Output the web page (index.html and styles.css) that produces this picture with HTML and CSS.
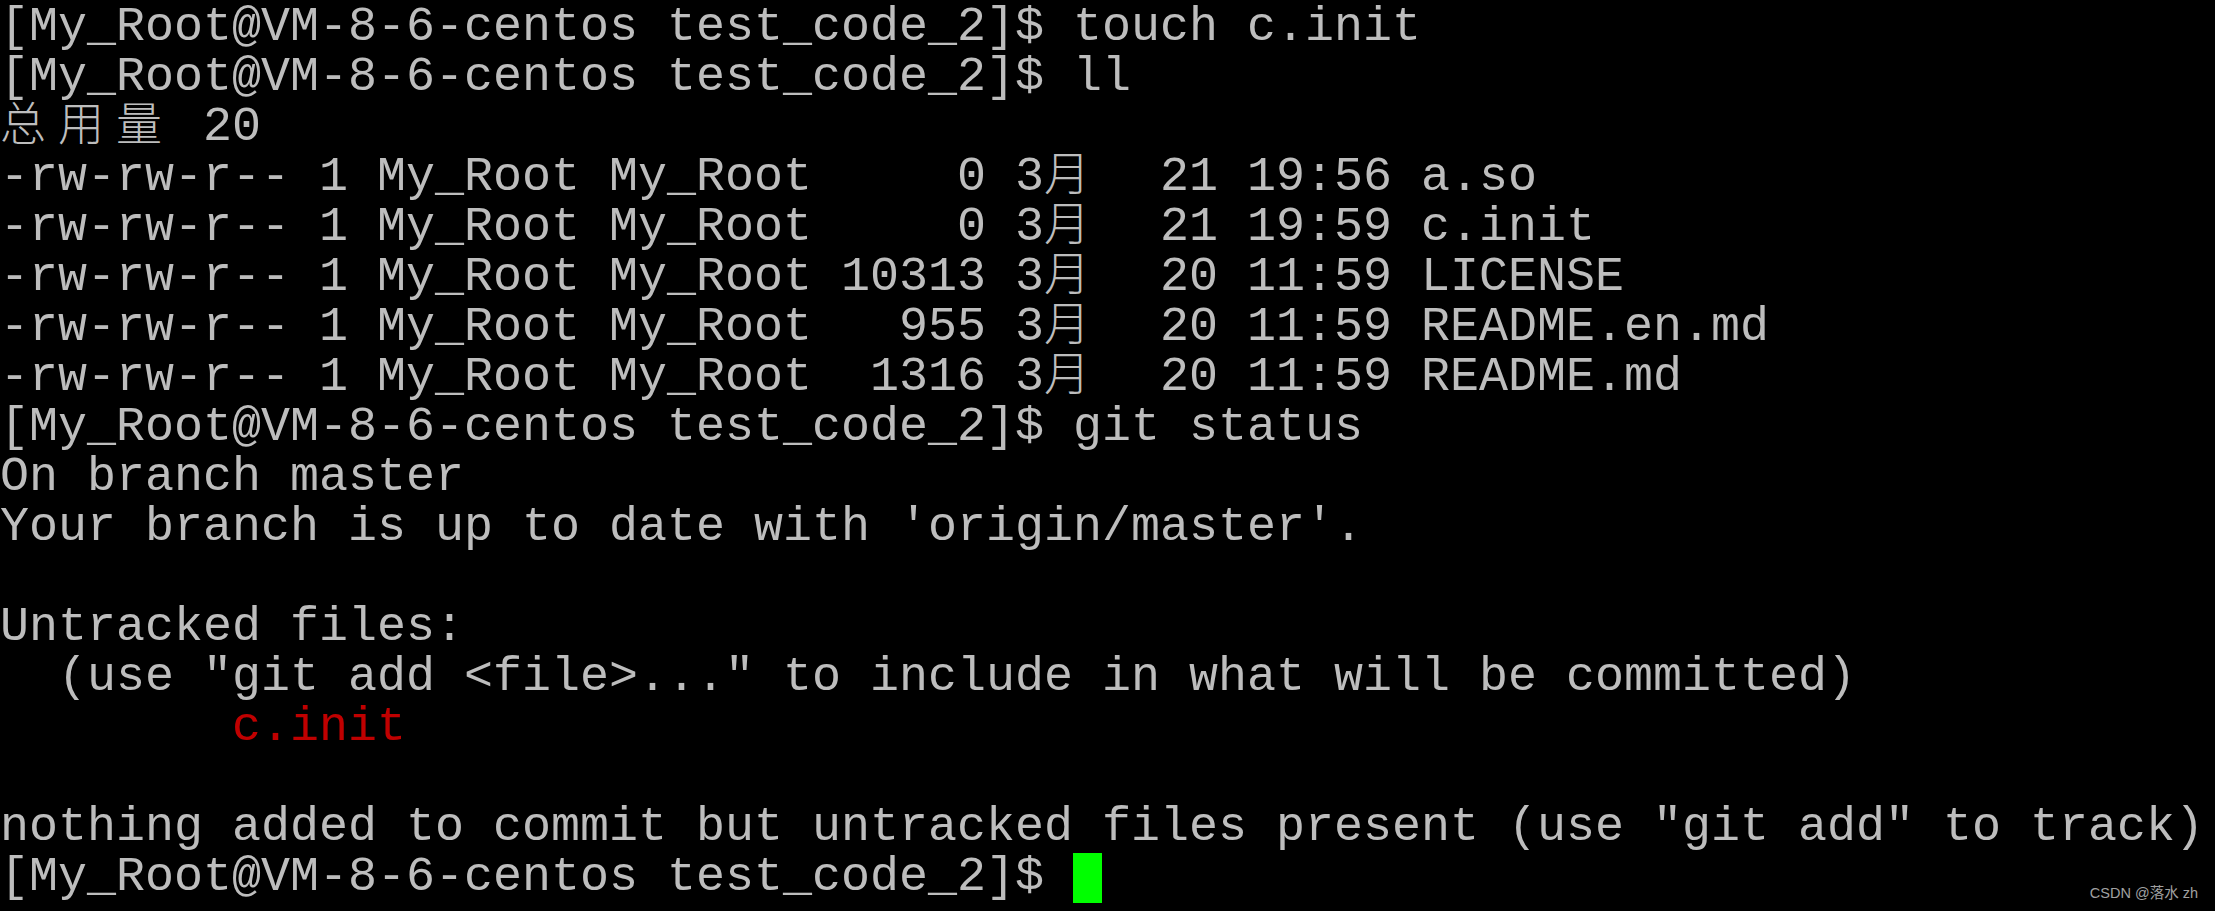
FILE: index.html
```html
<!DOCTYPE html>
<html lang="zh">
<head>
<meta charset="utf-8">
<title>terminal</title>
<link rel="stylesheet" href="styles.css">
</head>
<body>
<div class="term">
<div class="ln">[My_Root@VM-8-6-centos test_code_2]$ touch c.init</div>
<div class="ln">[My_Root@VM-8-6-centos test_code_2]$ ll</div>
<div class="ln"><span class="cjk">总用量</span> 20</div>
<div class="ln">-rw-rw-r-- 1 My_Root My_Root     0 3<span class="cjk">月</span>  21 19:56 a.so</div>
<div class="ln">-rw-rw-r-- 1 My_Root My_Root     0 3<span class="cjk">月</span>  21 19:59 c.init</div>
<div class="ln">-rw-rw-r-- 1 My_Root My_Root 10313 3<span class="cjk">月</span>  20 11:59 LICENSE</div>
<div class="ln">-rw-rw-r-- 1 My_Root My_Root   955 3<span class="cjk">月</span>  20 11:59 README.en.md</div>
<div class="ln">-rw-rw-r-- 1 My_Root My_Root  1316 3<span class="cjk">月</span>  20 11:59 README.md</div>
<div class="ln">[My_Root@VM-8-6-centos test_code_2]$ git status</div>
<div class="ln">On branch master</div>
<div class="ln">Your branch is up to date with 'origin/master'.</div>
<div class="ln"></div>
<div class="ln">Untracked files:</div>
<div class="ln">  (use "git add &lt;file&gt;..." to include in what will be committed)</div>
<div class="ln">        <span class="red">c.init</span></div>
<div class="ln"></div>
<div class="ln">nothing added to commit but untracked files present (use "git add" to track)</div>
<div class="ln">[My_Root@VM-8-6-centos test_code_2]$ <span class="cursor"></span></div>
</div>
<div class="watermark">CSDN @落水 zh</div>
</body>
</html>
```
FILE: styles.css
```css
html, body {
  margin: 0;
  padding: 0;
  background: #000;
}
body {
  position: relative;
  width: 2215px;
  height: 911px;
  overflow: hidden;
}
.term {
  padding-top: 3px;
  font-family: "Liberation Mono", "Noto Sans CJK SC", monospace;
  font-size: 48.33px;
  line-height: 50px;
  color: #bdbdbd;
}
.ln {
  height: 50px;
  white-space: pre;
}
.cjk {
  font-family: "Noto Sans CJK SC", sans-serif;
  font-size: 46px;
  font-weight: 300;
  letter-spacing: 12px;
  line-height: 34px;
}
.red {
  color: #c00000;
}
.cursor {
  display: inline-block;
  width: 29px;
  height: 50px;
  background: #00ff00;
  vertical-align: top;
}
.watermark {
  position: absolute;
  right: 17px;
  bottom: 11px;
  font-family: "Liberation Sans", "Noto Sans CJK SC", sans-serif;
  font-size: 14.5px;
  line-height: 1;
  color: #a0a0a0;
}
```
